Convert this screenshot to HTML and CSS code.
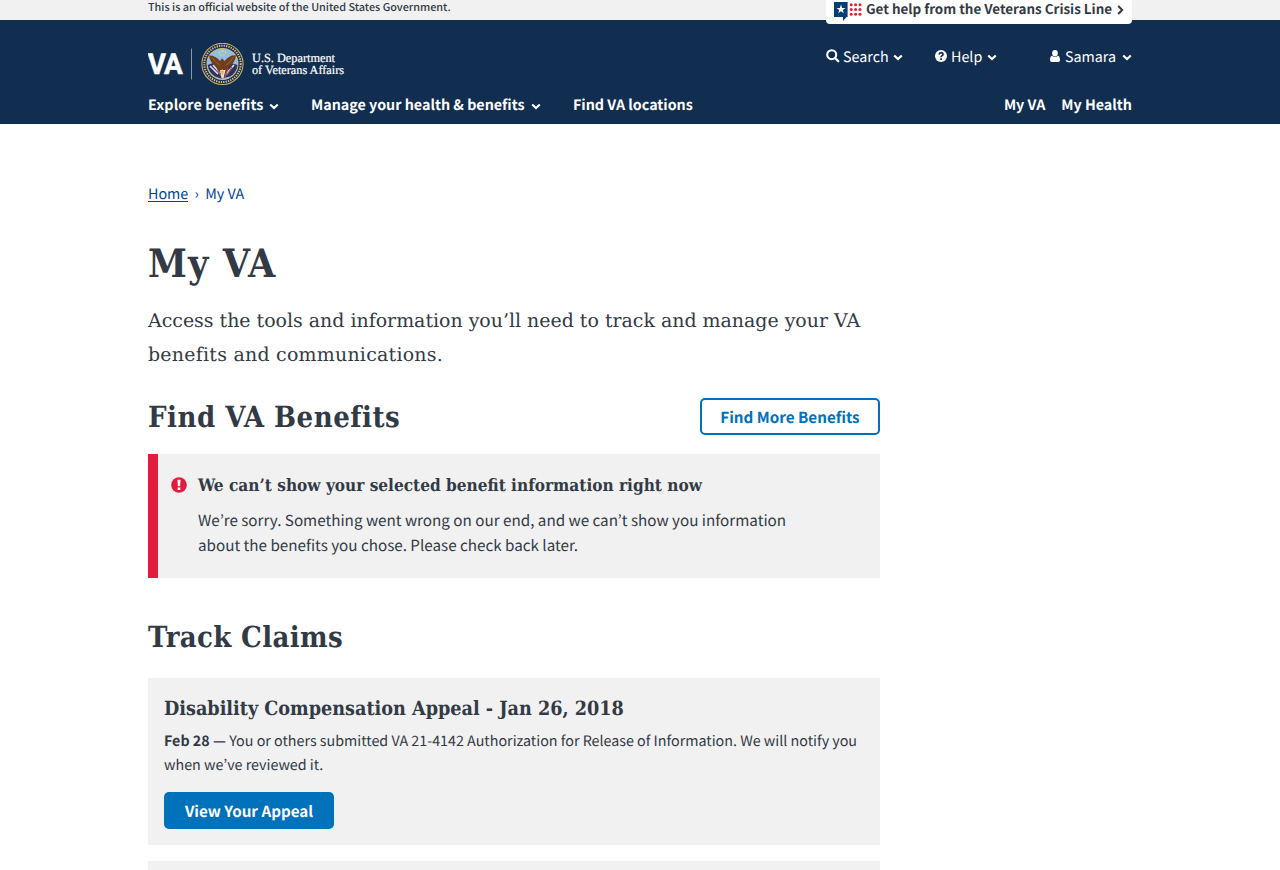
FILE: index.html
```html
<!DOCTYPE html>
<html lang="en">
<head>
<meta charset="utf-8">
<title>My VA | Veterans Affairs</title>
<link rel="stylesheet" href="styles.css">
</head>
<body>
<svg width="0" height="0" class="defs" aria-hidden="true">
  <symbol id="chev" viewBox="0 0 10 7"><path d="M1.2 1.4 5 5.1 8.8 1.4" fill="none" stroke="currentColor" stroke-width="2.1"/></symbol>
</svg>
<div class="banner">
  <div class="wrap banner-row">
    <span class="official">This is an official website of the United States Government.</span>
    <a class="crisis">
      <svg class="crisis-icon" width="28" height="20" viewBox="0 0 28 20">
        <path d="M0 1H13.6V16H12.6L9 20V16H0Z" fill="#003e73"/>
        <path d="M7 3.6 8.1 6.9H11.5L8.8 8.9 9.8 12.2 7 10.2 4.2 12.2 5.2 8.9 2.5 6.9H5.9Z" fill="#fff"/>
        <g fill="#e5202e"><circle cx="17.2" cy="3.7" r="1.5"/><circle cx="21.6" cy="3.7" r="1.5"/><circle cx="26" cy="3.7" r="1.5"/><circle cx="17.2" cy="8.4" r="1.5"/><circle cx="21.6" cy="8.4" r="1.5"/><circle cx="26" cy="8.4" r="1.5"/><circle cx="17.2" cy="13.2" r="1.5"/><circle cx="21.6" cy="13.2" r="1.5"/><circle cx="26" cy="13.2" r="1.5"/></g>
      </svg>
      <span>Get help from the Veterans Crisis Line</span>
      <svg class="crisis-arrow" width="7" height="10" viewBox="0 0 7 10"><path d="M1.2 1 5.2 5 1.2 9" fill="none" stroke="#323a45" stroke-width="2"/></svg>
    </a>
  </div>
</div>
<header class="header">
  <div class="wrap header-top">
    <a class="logo">
      <svg width="198" height="44" viewBox="0 0 198 44">
        <text class="logo-va" x="-0.3" y="31" textLength="34" lengthAdjust="spacingAndGlyphs">VA</text>
        <path d="M43.5 5.5V36.5" stroke="#8b98ab" stroke-width="1"/>
        <circle cx="74.5" cy="20.9" r="21.1" fill="#d9b65c"/>
        <circle cx="74.5" cy="20.9" r="20.1" fill="#1c2f5c"/>
        <circle cx="74.5" cy="20.9" r="18.2" fill="none" stroke="#d8c07a" stroke-width="2" stroke-dasharray="1.3 1.1"/>
        <circle cx="74.5" cy="20.9" r="16" fill="#e0bd62"/>
        <circle cx="74.5" cy="20.9" r="15.2" fill="#8fc0e2"/>
        <path d="M59.6 22Q61 30 67 33.5L73 35.4 82 33.6Q88.5 30 89.5 22L83 20 74 27 65 20Z" fill="#29345f"/>
        <path d="M62 23 70 31M65 22 72 30M86 22 78 31" stroke="#e9e3e6" stroke-width="1.6"/>
        <path d="M69 25 73 33M80 25 77 34M84 24 79 32" stroke="#b7505a" stroke-width="1.3"/>
        <path d="M61 12.5Q67 12 72 18L74 15.2 76.5 18Q82 11.5 88 12.5 87 20 81 23.5L78 29 74.5 26 71 29 68.5 23.5Q62 20 61 12.5Z" fill="#713d1d"/>
        <path d="M64 14.5Q68 20 72 22M85 14.5Q82 20 78 22" fill="none" stroke="#985b2b" stroke-width="1.2"/>
        <path d="M72 27H77.5L75.5 35H73.5Z" fill="#ece9e5"/>
        <path d="M73 27.5 76 27.5 75.5 31 74 33Z" fill="#e8b83d"/>
        <g fill="#edd46f"><circle cx="74.5" cy="8" r="1.1"/><circle cx="71.5" cy="9.5" r=".9"/><circle cx="77.5" cy="9.5" r=".9"/><circle cx="73" cy="12" r=".8"/><circle cx="76" cy="12" r=".8"/></g>
        <text class="logo-dept" x="104" y="18.9" textLength="83" lengthAdjust="spacingAndGlyphs">U.S. Department</text>
        <text class="logo-dept" x="104" y="30.6" textLength="92" lengthAdjust="spacingAndGlyphs">of Veterans Affairs</text>
      </svg>
    </a>
    <div class="tools">
      <a class="tool tool-search">
        <svg width="14" height="14" viewBox="0 0 14 14"><circle cx="5.7" cy="5.7" r="4.5" fill="none" stroke="#fff" stroke-width="2.1"/><path d="M9 9 12.3 12.3" stroke="#fff" stroke-width="2.3" stroke-linecap="round"/></svg>
        <span>Search</span><svg class="chev" width="10" height="7"><use href="#chev"/></svg>
      </a>
      <a class="tool tool-help">
        <svg width="12" height="12" viewBox="0 0 12 12"><circle cx="6" cy="6" r="6" fill="#fff"/><path d="M4 4.5Q4.3 2.7 6.1 2.7 8.1 2.8 8 4.3 7.9 5.2 6.9 5.7 6.1 6.1 6.1 7.2" fill="none" stroke="#112e51" stroke-width="1.7"/><path d="M5.2 8.2H7V9.9H5.2Z" fill="#112e51"/></svg>
        <span>Help</span><svg class="chev" width="10" height="7"><use href="#chev"/></svg>
      </a>
      <a class="tool tool-user">
        <svg width="10" height="12" viewBox="0 0 10 12"><ellipse cx="5" cy="3.3" rx="2.8" ry="3.3" fill="#fff"/><path d="M2 5.7Q5 8.2 8 5.7 10 6.4 10 10 10 12 8.2 12H1.8Q0 12 0 10 0 6.4 2 5.7Z" fill="#fff"/></svg>
        <span>Samara</span><svg class="chev" width="10" height="7"><use href="#chev"/></svg>
      </a>
    </div>
  </div>
  <nav class="wrap nav">
    <a class="nav-explore"><span>Explore benefits</span><svg class="chev" width="10" height="7"><use href="#chev"/></svg></a>
    <a class="nav-manage"><span>Manage your health &amp; benefits</span><svg class="chev" width="10" height="7"><use href="#chev"/></svg></a>
    <a class="nav-find">Find VA locations</a>
    <a class="nav-myva">My VA</a>
    <a class="nav-health">My Health</a>
  </nav>
</header>
<main class="wrap">
  <nav class="crumbs"><a class="crumb-home">Home</a><span class="crumb-sep">›</span><a>My VA</a></nav>
  <div class="content">
    <h1>My VA</h1>
    <p class="lead">Access the tools and information you’ll need to track and manage your VA<br><span class="lead-end">benefits and communications.</span></p>
    <div class="section-head">
      <h2 class="find-title">Find VA Benefits</h2>
      <a class="btn btn-outline">Find More Benefits</a>
    </div>
    <section class="alert">
      <svg class="alert-icon" width="16" height="16" viewBox="0 0 16 16"><circle cx="8" cy="8" r="7.8" fill="#e31c3d"/><path d="M6.5 2.7H9.5L9.1 9.3H6.9ZM6.7 10.6H9.3V13H6.7Z" fill="#fff"/></svg>
      <div>
        <h3 class="alert-title">We can’t show your selected benefit information right now</h3>
        <p class="alert-text">We’re sorry. Something went wrong on our end, and we can’t show you information<br>about the benefits you chose. Please check back later.</p>
      </div>
    </section>
    <h2 class="track-title">Track Claims</h2>
    <section class="card">
      <h3 class="card-title">Disability Compensation Appeal - Jan 26, 2018</h3>
      <p class="card-text"><strong>Feb 28 —</strong> You or others submitted VA 21-4142 Authorization for Release of Information. We will notify you<br>when we’ve reviewed it.</p>
      <a class="btn btn-primary">View Your Appeal</a>
    </section>
    <section class="card card-next"></section>
  </div>
</main>
</body>
</html>
```

FILE: styles.css
```css
* { box-sizing: border-box; }
body {
  margin: 0;
  height: 870px;
  overflow: hidden;
  background: #fff;
  color: #323a45;
  font-family: "Noto Sans CJK KR", "Open Sans", sans-serif;
  font-size: 14.31px;
  text-rendering: geometricPrecision;
}
h1, h2, h3, p { margin: 0; white-space: nowrap; }
h1, h2, h3 { font-family: "DejaVu Serif Condensed", "DejaVu Serif", serif; font-stretch: condensed; }
a, span { white-space: nowrap; }
svg { display: block; flex: none; }
.defs { position: absolute; }
.wrap { width: 984px; margin: 0 auto; }

.banner { height: 20px; background: #f1f1f1; }
.banner-row { display: flex; justify-content: space-between; align-items: flex-start; }
.official { font-size: 10.83px; font-weight: 500; line-height: 15px; }
.crisis {
  display: flex;
  width: 306px;
  height: 24px;
  padding-left: 8px;
  background: #fff;
  border-radius: 0 0 4px 4px;
  font-weight: 700;
  font-size: 13.42px;
  line-height: 17px;
  position: relative;
}
.crisis-icon { margin: 1px 4px 0 0; }
.crisis-arrow { margin: 5px 0 0 5px; }

.header { height: 104px; background: #112e51; color: #fff; }
.header-top { display: flex; justify-content: space-between; height: 73px; padding-top: 23px; }
.logo-va { font-family: Roboto, sans-serif; font-weight: 700; font-size: 29px; letter-spacing: -1px; fill: #fff; stroke: #fff; stroke-width: .5px; }
.logo-dept { font-family: "Liberation Serif", serif; font-size: 12.5px; fill: #fff; stroke: #fff; stroke-width: .2px; }
.tools { display: flex; width: 306px; height: 27px; }
.tool { display: flex; align-items: center; line-height: 24px; }
.tool > svg:first-child { margin-top: -1px; }
.tool .chev { margin: 1px 0 0 5px; }
.tool-search { width: 109px; }
.tool-search span { margin-left: 3px; }
.tool-search .chev { margin-left: 4px; }
.tool-help { width: 115px; }
.tool-help span { margin-left: 4px; }
.tool-user { width: 82px; }
.tool-user span { margin-left: 5px; }
.tool-user .chev { margin-left: auto; }
.nav { display: flex; font-weight: 700; line-height: 24px; }
.nav a { display: flex; align-items: center; }
.nav .chev { margin: 2px 0 0 6px; }
.nav-explore { width: 163px; }
.nav-explore span { letter-spacing: .1px; }
.nav-explore .chev { margin-left: 5px; }
.nav-manage { width: 262px; }
.nav-myva { margin-left: auto; margin-right: 16px; }

.crumbs { display: flex; padding-top: 58px; line-height: 24px; color: #004793; }
.crumb-home { height: 20px; border-bottom: 1px solid #004793; }
.crumb-sep { width: 17px; text-align: center; }
.content { width: 732px; }
h1 { margin-top: 32px; font-size: 39px; line-height: 52px; letter-spacing: 1.1px; }
.lead {
  margin-top: 14px;
  font-family: "DejaVu Serif", serif;
  font-size: 18.95px;
  line-height: 34px;
}
.lead-end { letter-spacing: .25px; }
.section-head { display: flex; justify-content: space-between; align-items: center; margin-top: 26px; height: 37px; }
h2 { font-size: 29px; line-height: 38px; }
.find-title { letter-spacing: .5px; }
.btn {
  display: flex;
  align-items: center;
  justify-content: center;
  height: 37px;
  border-radius: 5px;
  font-size: 15.2px;
  font-weight: 700;
}
.btn-outline { width: 180px; border: 2px solid #0071bb; color: #0071bb; }
.btn-primary { width: 170px; background: #0071bb; color: #fff; }
.alert {
  display: flex;
  height: 124px;
  margin-top: 19px;
  padding: 19px 0 0 13px;
  border-left: 10px solid #e31c3d;
  background: #f1f1f1;
}
.alert-icon { margin: 4px 11px 0 0; }
.alert-title { font-size: 17.08px; line-height: 27px; }
.alert-text { margin-top: 8px; font-size: 15.22px; line-height: 25px; }
.track-title { margin-top: 40px; letter-spacing: .35px; }
.card { height: 167px; margin-top: 16px; padding: 16px; background: #f1f1f1; }
.card-next { height: 9px; padding: 0; }
.track-title + .card { margin-top: 22px; }
.card-title { font-size: 19.6px; line-height: 29px; }
.card-text { margin-top: 6px; line-height: 24px; }
.card .btn { margin-top: 15px; }
```
